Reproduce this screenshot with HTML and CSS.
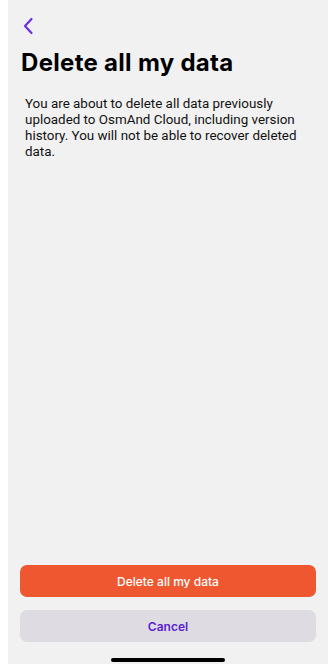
FILE: index.html
```html
<!DOCTYPE html>
<html>
<head>
<meta charset="utf-8">
<link rel="stylesheet" href="styles.css">
</head>
<body>
<div class="screen">
  <div class="nav">
    <svg class="back" width="12" height="18" viewBox="0 0 12 18"><path d="M9.5 2 L3 9 L9.5 16" fill="none" stroke="#6b2fe0" stroke-width="2.2" stroke-linecap="round" stroke-linejoin="round"/></svg>
  </div>
  <h1 class="title">Delete all my data</h1>
  <p class="desc">You are about to delete all data previously uploaded to OsmAnd Cloud, including version history. You will not be able to recover deleted data.</p>
  <div class="spacer"></div>
  <div class="actions">
    <button class="btn danger">Delete all my data</button>
    <button class="btn cancel">Cancel</button>
  </div>
  <div class="home"><div class="bar"></div></div>
</div>
</body>
</html>
```
FILE: styles.css
```css
html, body { margin: 0; padding: 0; background: #fff; }
body { font-family: Inter, "Liberation Sans", Arial, sans-serif; }
.screen {
  margin: 0 8px;
  width: 320px;
  height: 664px;
  background: #f1f1f1;
  display: flex;
  flex-direction: column;
  box-sizing: border-box;
}
.nav { height: 36px; padding: 17px 0 0 14px; box-sizing: border-box; }
.back { display: block; }
.title {
  margin: 12px 0 0 13px;
  font-size: 24px;
  font-weight: 700;
  color: #000;
  letter-spacing: 0.3px;
  line-height: 30px;
}
.desc {
  margin: 18px 16px 0 17px;
  font-family: Roboto, "Liberation Sans", Arial, sans-serif;
  font-size: 13.4px;
  line-height: 16px;
  color: #111;
}
.spacer { flex: 1; }
.actions { display: flex; flex-direction: column; gap: 13px; padding: 0 12px 0 12px; }
.btn {
  height: 32px;
  border: none;
  border-radius: 7px;
  font-family: Inter, "Liberation Sans", Arial, sans-serif;
  font-size: 12px;
  font-weight: 500;
}
.danger { background: #ee5730; color: #fff; }
.cancel { background: #dedce2; color: #5a1fd1; font-weight: 600; }
.home { height: 22px; display: flex; justify-content: center; align-items: flex-end; padding-bottom: 2px; box-sizing: border-box; }
.bar { width: 114px; height: 4px; border-radius: 2px; background: #000; }
```
